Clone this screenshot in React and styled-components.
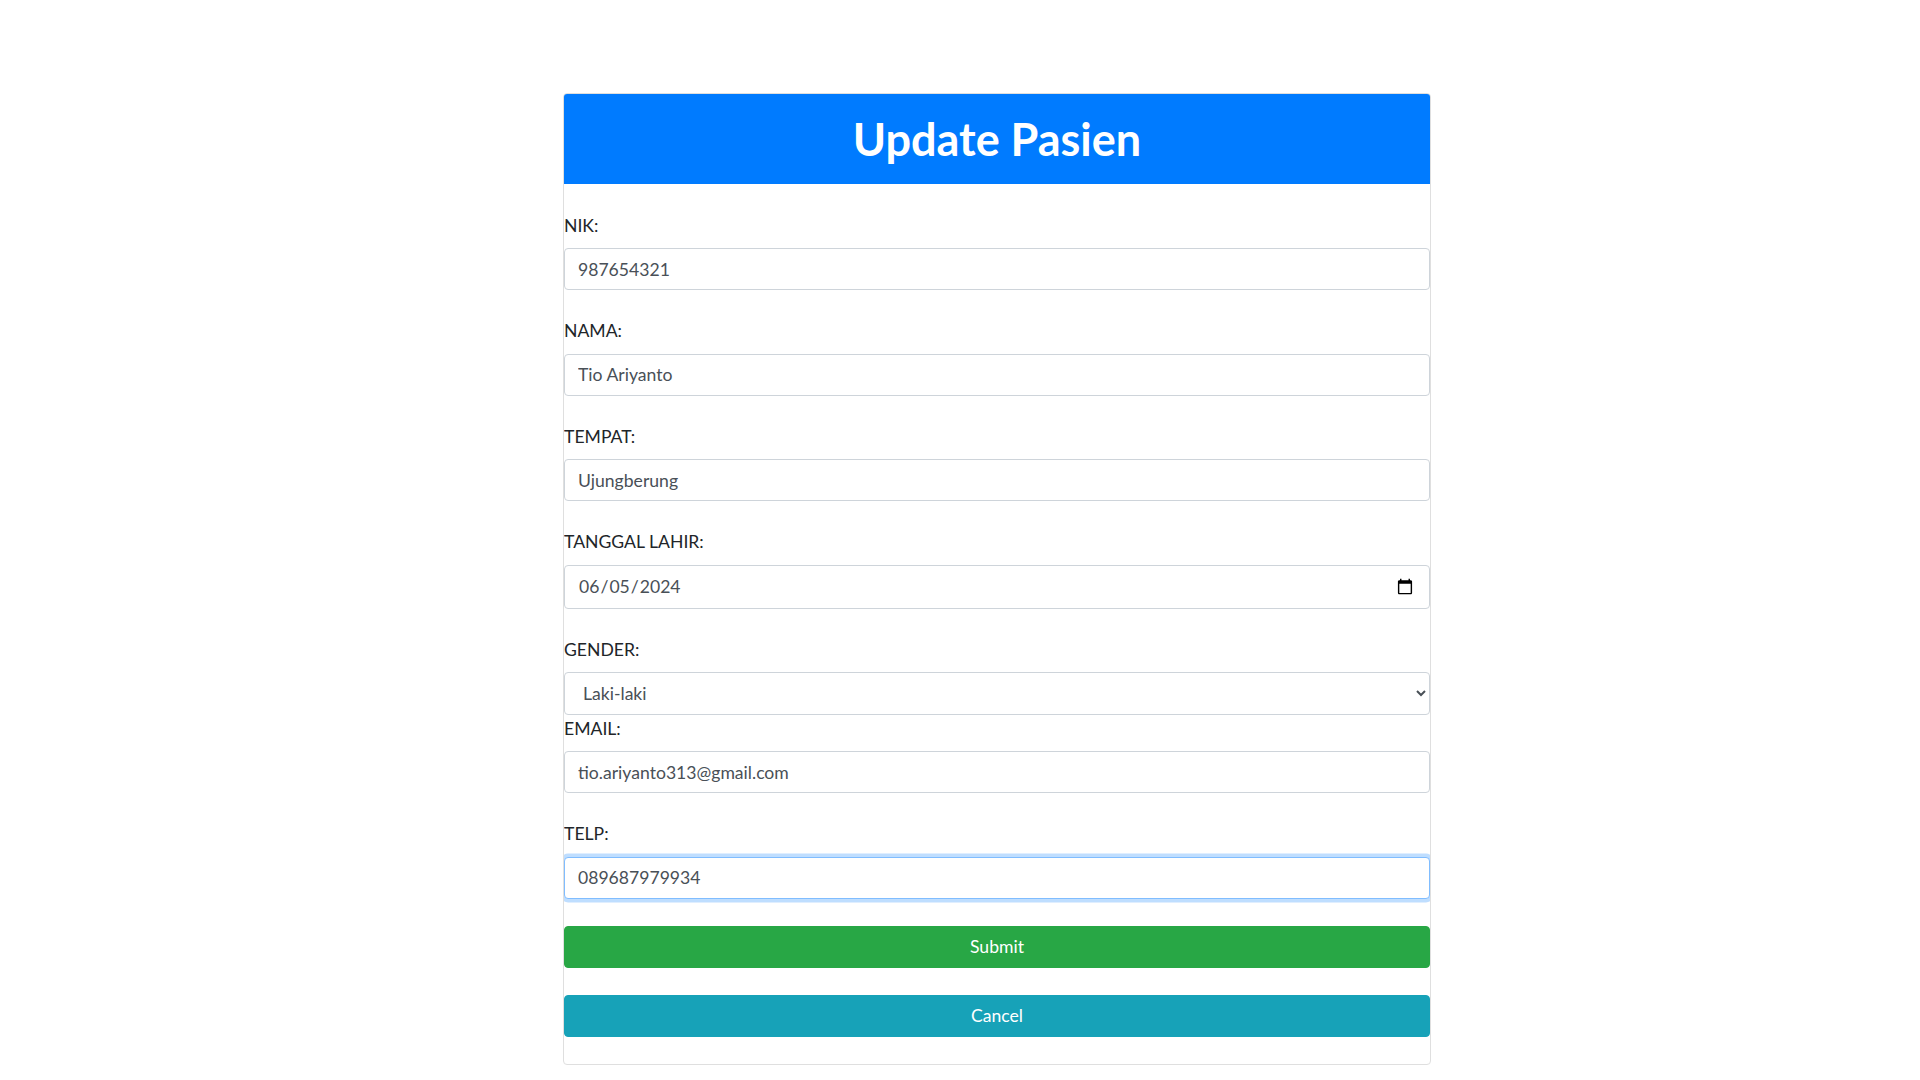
import React, { useLayoutEffect } from 'react';
import styled, { createGlobalStyle } from 'styled-components';

const GlobalStyle = createGlobalStyle`
  html, body {
    margin: 0;
    padding: 0;
    background: #fff;
  }
  body {
    font-family: Lato, "Open Sans", "Noto Sans", sans-serif;
    font-size: 17.6px;
    color: #212529;
  }
  * { box-sizing: border-box; }
`;

const fields = [
  { label: 'NIK:', value: '987654321' },
  { label: 'NAMA:', value: 'Tio Ariyanto' },
  { label: 'TEMPAT:', value: 'Ujungberung' },
];

const App = () => {
  // the reference is captured a bit scrolled down
  useLayoutEffect(() => {
    window.scrollTo(0, 129);
  }, []);

  return (
    <Page>
      <GlobalStyle />
      <PageTitle>Update Data Pasien</PageTitle>
      <Card>
        <CardHeader>Update Pasien</CardHeader>
        <CardBody>
          {fields.map((f) => (
            <Group key={f.label}>
              <Label>{f.label}</Label>
              <Input type="text" defaultValue={f.value} />
            </Group>
          ))}
          <Group>
            <Label>TANGGAL LAHIR:</Label>
            <Input type="date" defaultValue="2024-06-05" tall />
          </Group>
          <Label>GENDER:</Label>
          <Select defaultValue="L">
            <option value="L">Laki-laki</option>
            <option value="P">Perempuan</option>
          </Select>
          <Group>
            <Label>EMAIL:</Label>
            <Input type="email" defaultValue="tio.ariyanto313@gmail.com" />
          </Group>
          <Group>
            <Label>TELP:</Label>
            <Input type="text" defaultValue="089687979934" focused />
          </Group>
          <Button type="button" color="#28a745">Submit</Button>
          <Button type="button" color="#17a2b8">Cancel</Button>
        </CardBody>
      </Card>
    </Page>
  );
};

export default App;

const Page = styled.div`
  padding: 90px 0 34px 563px;
`;

const PageTitle = styled.h2`
  margin: 0;
  font-size: 32px;
  line-height: 38px;
  font-weight: 500;
  color: #1c2340;
`;

const Card = styled.div`
  margin-top: 94px;
  width: 868px;
  border: 1px solid #dfdfdf;
  border-radius: 4px;
  overflow: hidden;
  background: #fff;
`;

const CardHeader = styled.h1`
  margin: 0;
  height: 90px;
  background: #007bff;
  color: #fff;
  font-size: 45px;
  font-weight: 700;
  display: flex;
  align-items: center;
  justify-content: center;
`;

const CardBody = styled.form`
  padding: 28px 0 27px;
  display: flex;
  flex-direction: column;
`;

const Group = styled.div`
  display: flex;
  flex-direction: column;
  margin-bottom: 27px;
`;

const Label = styled.label`
  display: block;
  line-height: 26.4px;
  padding-top: 1px;
  margin-bottom: 9px;
  color: #212529;
`;

const Input = styled.input`
  width: 100%;
  height: ${(p) => (p.tall ? '44px' : '42px')};
  padding: 0 13px;
  font-family: inherit;
  font-size: 17.6px;
  color: #495057;
  background: #fff;
  border: 1px solid ${(p) => (p.focused ? '#80bdff' : '#ced4da')};
  border-radius: 4px;
  box-shadow: ${(p) => (p.focused ? '0 0 0 3.5px rgba(0, 123, 255, 0.25)' : 'none')};
  outline: none;
`;

const Select = styled.select`
  width: 100%;
  height: 43px;
  padding: 0 9px 0 14px;
  font-family: inherit;
  font-size: 17.6px;
  color: #495057;
  background: #fff;
  border: 1px solid #ced4da;
  border-radius: 4px;
  outline: none;
`;

const Button = styled.button`
  width: 100%;
  height: 42px;
  margin-bottom: 27px;
  border: 1px solid ${(p) => p.color};
  border-radius: 4px;
  background: ${(p) => p.color};
  color: #fff;
  font-family: inherit;
  font-size: 17.6px;
  cursor: pointer;

  &:last-child {
    margin-bottom: 0;
  }
`;
